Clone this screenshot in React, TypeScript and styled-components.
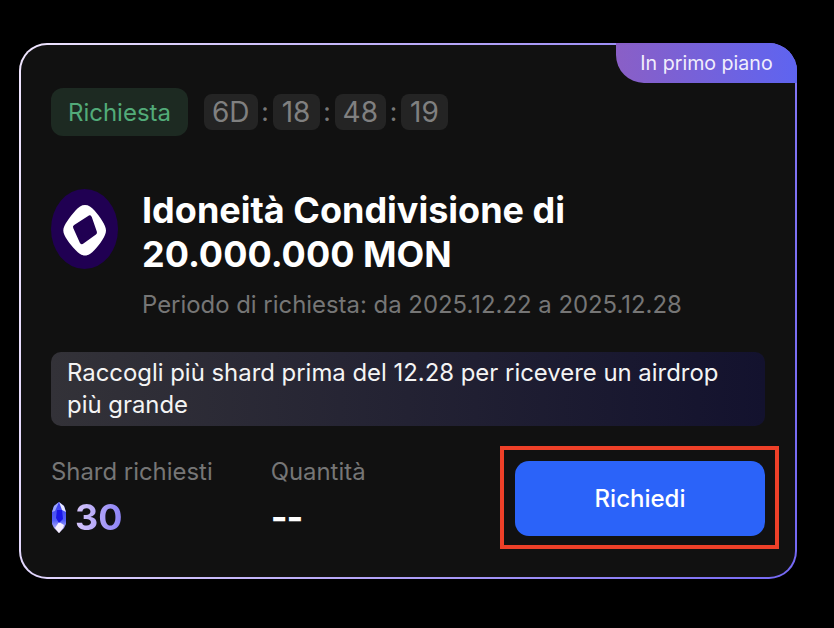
import styled, { createGlobalStyle } from 'styled-components';

const GlobalStyle = createGlobalStyle`
  html, body {
    margin: 0;
    padding: 0;
    background: #000;
    font-family: 'Inter', 'Liberation Sans', sans-serif;
  }
`;

const timeParts = ['6D', '18', '48', '19'];

const MonadLogo = () => (
  <LogoSvg viewBox="0 0 67 80" aria-hidden="true">
    <ellipse cx="33.5" cy="40" rx="33.5" ry="40" fill="#200052" />
    <path
      d="M34 16C37.500 16 40.500 18 43.500 21.500C49 28 55 36 55 41.500C55 47 49 55 43.500 61C40.500 64.500 37.500 66.500 34 66.500C30.500 66.500 27.500 64.500 24.500 61C19 55 12.300 47 12.300 41.500C12.300 36 19 28 24.500 21.500C27.500 18 30.500 16 34 16Z"
      fill="#fff"
    />
    <polygon
      points="38.500,29 43.500,43.500 31,52.500 24.500,38"
      fill="#200052"
      stroke="#200052"
      strokeWidth="5"
      strokeLinejoin="round"
    />
  </LogoSvg>
);

const Crystal = () => (
  <CrystalSvg viewBox="0 0 14 31" aria-hidden="true">
    <defs>
      <linearGradient id="crystalBody" x1="0" y1="0" x2="0" y2="1">
        <stop offset="0" stopColor="#3a3cf0" />
        <stop offset="0.6" stopColor="#5560f6" />
        <stop offset="1" stopColor="#e8dcff" />
      </linearGradient>
    </defs>
    <path d="M7 0l5 4 2 6v12l-2 4-5 5-5-5-2-4V10l2-6Z" fill="url(#crystalBody)" />
    <path d="M7 0l5 4 2 6-4-2Z" fill="#e6e8ff" />
    <path d="M7 0 2 4 0 10l3-1Z" fill="#9aa4ff" />
    <path d="M3 26l4 5 4-5 1-3-5-3Z" fill="#f6efff" />
    <path d="M5 8l5 0 1 9-4 4-3-5Z" fill="#1a16e6" />
  </CrystalSvg>
);

const App = () => (
  <>
    <GlobalStyle />
    <Card>
      <Ribbon>In primo piano</Ribbon>
      <StatusRow>
        <StatusTag>Richiesta</StatusTag>
        <Countdown>
          {timeParts.map((part, i) => (
            <TimeGroup key={part + i}>
              {i > 0 && <Colon>:</Colon>}
              <TimeBox>{part}</TimeBox>
            </TimeGroup>
          ))}
        </Countdown>
      </StatusRow>
      <Heading>
        <MonadLogo />
        <HeadingText>
          <Title>Idoneità Condivisione di 20.000.000 MON</Title>
          <Period>Periodo di richiesta: da 2025.12.22 a 2025.12.28</Period>
        </HeadingText>
      </Heading>
      <Notice>Raccogli più shard prima del 12.28 per ricevere un airdrop più grande</Notice>
      <Footer>
        <Stats>
          <Stat>
            <StatLabel>Shard richiesti</StatLabel>
            <StatValue>
              <Crystal />
              <GradientNumber>30</GradientNumber>
            </StatValue>
          </Stat>
          <Stat>
            <StatLabel>Quantità</StatLabel>
            <StatValue>
              <Dashes>--</Dashes>
            </StatValue>
          </Stat>
        </Stats>
        <ClaimButton>Richiedi</ClaimButton>
      </Footer>
    </Card>
  </>
);

export default App;

const Card = styled.div`
  position: relative;
  box-sizing: border-box;
  width: 778px;
  height: 536px;
  margin: 43px 0 0 19px;
  padding: 43px 30px 0;
  border: 2px solid transparent;
  border-radius: 28px;
  background:
    linear-gradient(#111111, #111111) padding-box,
    linear-gradient(100deg, #f0e6ff 0%, #b5a5f8 50%, #7468f4 100%) border-box;
`;

const Ribbon = styled.div`
  position: absolute;
  top: -2px;
  right: -2px;
  box-sizing: border-box;
  width: 181px;
  height: 40px;
  display: flex;
  align-items: center;
  justify-content: center;
  border-radius: 0 28px 0 28px;
  background: linear-gradient(90deg, #8a5fc6 0%, #5e64f0 100%);
  color: #f1eefc;
  font-size: 19.6px;
`;

const StatusRow = styled.div`
  display: flex;
  align-items: center;
  gap: 16px;
  height: 48px;
`;

const StatusTag = styled.span`
  box-sizing: border-box;
  width: 137px;
  height: 48px;
  display: flex;
  align-items: center;
  justify-content: center;
  border-radius: 12px;
  background: #1d2a22;
  color: #52ab79;
  font-size: 24px;
`;

const Countdown = styled.div`
  display: flex;
  align-items: center;
`;

const TimeGroup = styled.div`
  display: flex;
  align-items: center;
`;

const Colon = styled.span`
  width: 15px;
  text-align: center;
  color: #777;
  font-size: 26px;
  line-height: 36px;
`;

const TimeBox = styled.span`
  box-sizing: border-box;
  min-width: 47px;
  height: 36px;
  padding: 0 8px;
  border-radius: 8px;
  background: #242424;
  color: #808080;
  font-size: 28px;
  line-height: 36px;
  text-align: center;
`;

const Heading = styled.div`
  display: flex;
  align-items: flex-start;
  gap: 24px;
  margin-top: 53px;
`;

const LogoSvg = styled.svg`
  flex: none;
  width: 67px;
  height: 80px;
`;

const HeadingText = styled.div`
  flex: 1;
  margin-top: -1px;
`;

const Title = styled.h2`
  margin: 0;
  max-width: 480px;
  color: #fff;
  font-size: 36px;
  font-weight: 700;
  line-height: 44px;
`;

const Period = styled.p`
  margin: 14px 0 0;
  color: #767676;
  font-size: 23.9px;
  line-height: 30px;
`;

const Notice = styled.div`
  box-sizing: border-box;
  height: 74px;
  margin-top: 32px;
  padding: 5px 16px;
  border-radius: 10px;
  background: linear-gradient(90deg, #333238 0%, #13122e 100%);
  color: #f4f4f4;
  font-size: 23.9px;
  line-height: 32px;
`;

const Footer = styled.div`
  display: flex;
  align-items: flex-start;
  justify-content: space-between;
  margin-top: 35px;
`;

const Stats = styled.div`
  display: flex;
  gap: 58px;
`;

const Stat = styled.div`
  display: flex;
  flex-direction: column;
`;

const StatLabel = styled.span`
  color: #767676;
  font-size: 23.9px;
  line-height: 22px;
`;

const StatValue = styled.div`
  display: flex;
  align-items: center;
  gap: 9px;
  height: 44px;
  margin-top: 12px;
  color: #fff;
  font-size: 36px;
  font-weight: 700;
`;

const CrystalSvg = styled.svg`
  flex: none;
  width: 14px;
  height: 31px;
  margin-left: 1px;
`;

const GradientNumber = styled.span`
  background: linear-gradient(90deg, #d8c8fb 0%, #8a80f5 100%);
  -webkit-background-clip: text;
  background-clip: text;
  color: transparent;
`;

const Dashes = styled.span`
  letter-spacing: -1px;
`;

const ClaimButton = styled.button`
  position: relative;
  width: 250px;
  height: 75px;
  border: 0;
  border-radius: 14px;
  background: #2b63f9;
  color: #fff;
  font-family: inherit;
  font-size: 24px;
  font-weight: 450;

  /* red annotation frame around the button */
  &::after {
    content: '';
    position: absolute;
    top: -15px;
    left: -15px;
    right: -14px;
    bottom: -13px;
    border: 4px solid #ee4028;
    pointer-events: none;
  }
`;
